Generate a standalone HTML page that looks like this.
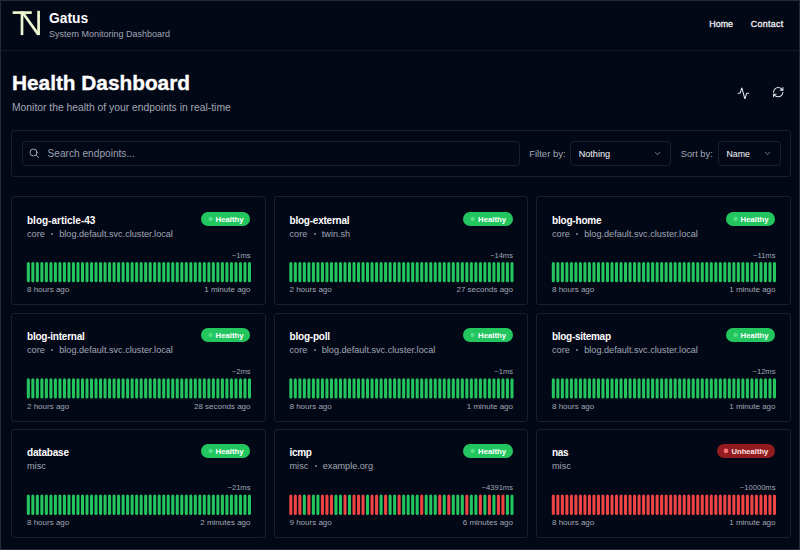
<!DOCTYPE html>
<html><head><meta charset="utf-8"><title>Gatus</title>
<style>
html,body{margin:0;padding:0;}
body{width:800px;height:550px;overflow:hidden;background:#030817;position:relative;font-family:"Liberation Sans", sans-serif;}
.t{position:absolute;white-space:nowrap;line-height:1;}
.b{position:absolute;box-sizing:border-box;}
.bars{position:absolute;height:20.5px;}
.bars i{position:absolute;top:0;width:3px;height:20.5px;border-radius:1.2px;}
</style></head><body>
<div class="b" style="left:0;top:0;width:800px;height:550px;border:1px solid #242937;box-sizing:border-box;z-index:10"></div>
<div class="b" style="left:0;top:50px;width:800px;height:1px;background:#131827"></div>
<svg class="b" style="left:0;top:0" width="60" height="50" viewBox="0 0 60 50">
<g stroke="#ecf5d0" stroke-width="2.7" fill="none" stroke-linecap="butt">
<path d="M12.6 12.6 H31.8"/>
<path d="M22 11.3 V35.1"/>
<path d="M22.4 12.3 L38.4 34.6"/>
<path d="M38.6 10.8 V35.1"/>
</g></svg>
<div class="t" style="left:49.00px;top:11.82px;font-size:13.8px;color:#ffffff;font-weight:700;">Gatus</div>
<div class="t" style="left:49.00px;top:30.38px;font-size:9px;color:#a1a7b4;font-weight:400;">System Monitoring Dashboard</div>
<div class="t" style="left:709.30px;top:20.27px;font-size:8.9px;color:#eef0f4;font-weight:400;-webkit-text-stroke:0.3px #eef0f4">Home</div>
<div class="t" style="left:750.80px;top:20.27px;font-size:8.9px;color:#eef0f4;font-weight:400;-webkit-text-stroke:0.3px #eef0f4;letter-spacing:0.3px">Contact</div>
<div class="t" style="left:12.00px;top:73.19px;font-size:20.8px;color:#ffffff;font-weight:700;-webkit-text-stroke:0.35px #fff">Health Dashboard</div>
<div class="t" style="left:12.00px;top:103.25px;font-size:10.34px;color:#a1a7b4;font-weight:400;">Monitor the health of your endpoints in real-time</div>
<svg class="b" style="left:737.3px;top:86.8px" width="12.7" height="12.7" viewBox="0 0 24 24"><path d="M22 12h-2.48a2 2 0 0 0-1.93 1.46l-2.35 8.36a.25.25 0 0 1-.48 0L9.24 2.18a.25.25 0 0 0-.48 0l-2.35 8.36A2 2 0 0 1 4.49 12H2" stroke="#e5e7eb" stroke-width="2" fill="none" stroke-linecap="round" stroke-linejoin="round"/></svg>
<svg class="b" style="left:772.4px;top:86.2px" width="12.4" height="12.4" viewBox="0 0 24 24"><g stroke="#e5e7eb" stroke-width="2" fill="none" stroke-linecap="round" stroke-linejoin="round"><path d="M3 12a9 9 0 0 1 9-9 9.75 9.75 0 0 1 6.74 2.74L21 8"/><path d="M21 3v5h-5"/><path d="M21 12a9 9 0 0 1-9 9 9.75 9.75 0 0 1-6.74-2.74L3 16"/><path d="M8 16H3v5"/></g></svg>
<div class="b" style="left:11.00px;top:130.00px;width:779.50px;height:46.50px;border:1px solid #1a1f2e;border-radius:3px;background:transparent;"></div>
<div class="b" style="left:22.00px;top:141.00px;width:497.50px;height:25.00px;border:1px solid #1a1f2e;border-radius:4px;background:transparent;"></div>
<svg class="b" style="left:28px;top:147px" width="12" height="12" viewBox="0 0 24 24"><g stroke="#a3a9b7" stroke-width="2" fill="none" stroke-linecap="round"><circle cx="11" cy="11" r="7"/><path d="m21 21-4.3-4.3"/></g></svg>
<div class="t" style="left:47.60px;top:149.32px;font-size:10.14px;color:#9aa1b2;font-weight:400;">Search endpoints...</div>
<div class="t" style="left:529.20px;top:149.36px;font-size:9.5px;color:#a1a7b4;font-weight:400;">Filter by:</div>
<div class="b" style="left:570.00px;top:141.00px;width:100.60px;height:25.00px;border:1px solid #1a1f2e;border-radius:4px;background:transparent;"></div>
<div class="t" style="left:578.70px;top:149.70px;font-size:9.1px;color:#f8fafc;font-weight:400;">Nothing</div>
<div class="t" style="left:680.70px;top:149.53px;font-size:9.3px;color:#a1a7b4;font-weight:400;">Sort by:</div>
<div class="b" style="left:718.20px;top:141.00px;width:63.00px;height:25.00px;border:1px solid #1a1f2e;border-radius:4px;background:transparent;"></div>
<div class="t" style="left:726.50px;top:150.45px;font-size:8.8px;color:#f8fafc;font-weight:400;">Name</div>
<svg class="b" style="left:653.0px;top:149px" width="9" height="9" viewBox="0 0 24 24"><path d="m6 9 6 6 6-6" stroke="#9aa1b2" stroke-width="2" fill="none" stroke-linecap="round" stroke-linejoin="round"/></svg>
<svg class="b" style="left:762.8px;top:149px" width="9" height="9" viewBox="0 0 24 24"><path d="m6 9 6 6 6-6" stroke="#9aa1b2" stroke-width="2" fill="none" stroke-linecap="round" stroke-linejoin="round"/></svg>
<div class="b" style="left:11.00px;top:196.00px;width:254.50px;height:109.00px;border:1px solid #1a1f2e;border-radius:3px;background:transparent;"></div>
<div class="t" style="left:27.00px;top:215.94px;font-size:10px;color:#ffffff;font-weight:700;letter-spacing:0px">blog-article-43</div>
<div class="t" style="left:27.00px;top:229.85px;font-size:9.15px;color:#a1a7b4;font-weight:400;">core<span style="display:inline-block;width:2.2px;height:2.2px;border-radius:50%;background:#a1a7b4;margin:0 6.0px 0 6.3px;vertical-align:1.9px;opacity:0.85"></span>blog.default.svc.cluster.local</div>
<div class="b" style="left:200.80px;top:212.00px;width:49.5px;height:13.5px;border-radius:7px;background:#22c55e"></div>
<svg class="b" style="left:200.80px;top:212.00px" width="20" height="14"><circle cx="9.6" cy="7.0" r="2.15" fill="#55dd88"/></svg>
<div class="t" style="left:215.60px;top:215.74px;font-size:7.75px;color:#ffffff;font-weight:700;">Healthy</div>
<div class="t" style="right:549.50px;top:252.07px;font-size:7.6px;color:#a1a7b4;font-weight:400;text-align:right;">~1ms</div>
<svg class="b" style="left:26px;top:262px" width="227" height="22"><rect x="0.80" y="0.00" width="3.06" height="20.3" rx="1.5" fill="#22c55e"/><rect x="5.31" y="0.00" width="3.06" height="20.3" rx="1.5" fill="#22c55e"/><rect x="9.83" y="0.00" width="3.06" height="20.3" rx="1.5" fill="#22c55e"/><rect x="14.34" y="0.00" width="3.06" height="20.3" rx="1.5" fill="#22c55e"/><rect x="18.85" y="0.00" width="3.06" height="20.3" rx="1.5" fill="#22c55e"/><rect x="23.36" y="0.00" width="3.06" height="20.3" rx="1.5" fill="#22c55e"/><rect x="27.88" y="0.00" width="3.06" height="20.3" rx="1.5" fill="#22c55e"/><rect x="32.39" y="0.00" width="3.06" height="20.3" rx="1.5" fill="#22c55e"/><rect x="36.90" y="0.00" width="3.06" height="20.3" rx="1.5" fill="#22c55e"/><rect x="41.42" y="0.00" width="3.06" height="20.3" rx="1.5" fill="#22c55e"/><rect x="45.93" y="0.00" width="3.06" height="20.3" rx="1.5" fill="#22c55e"/><rect x="50.44" y="0.00" width="3.06" height="20.3" rx="1.5" fill="#22c55e"/><rect x="54.96" y="0.00" width="3.06" height="20.3" rx="1.5" fill="#22c55e"/><rect x="59.47" y="0.00" width="3.06" height="20.3" rx="1.5" fill="#22c55e"/><rect x="63.98" y="0.00" width="3.06" height="20.3" rx="1.5" fill="#22c55e"/><rect x="68.49" y="0.00" width="3.06" height="20.3" rx="1.5" fill="#22c55e"/><rect x="73.01" y="0.00" width="3.06" height="20.3" rx="1.5" fill="#22c55e"/><rect x="77.52" y="0.00" width="3.06" height="20.3" rx="1.5" fill="#22c55e"/><rect x="82.03" y="0.00" width="3.06" height="20.3" rx="1.5" fill="#22c55e"/><rect x="86.55" y="0.00" width="3.06" height="20.3" rx="1.5" fill="#22c55e"/><rect x="91.06" y="0.00" width="3.06" height="20.3" rx="1.5" fill="#22c55e"/><rect x="95.57" y="0.00" width="3.06" height="20.3" rx="1.5" fill="#22c55e"/><rect x="100.09" y="0.00" width="3.06" height="20.3" rx="1.5" fill="#22c55e"/><rect x="104.60" y="0.00" width="3.06" height="20.3" rx="1.5" fill="#22c55e"/><rect x="109.11" y="0.00" width="3.06" height="20.3" rx="1.5" fill="#22c55e"/><rect x="113.62" y="0.00" width="3.06" height="20.3" rx="1.5" fill="#22c55e"/><rect x="118.14" y="0.00" width="3.06" height="20.3" rx="1.5" fill="#22c55e"/><rect x="122.65" y="0.00" width="3.06" height="20.3" rx="1.5" fill="#22c55e"/><rect x="127.16" y="0.00" width="3.06" height="20.3" rx="1.5" fill="#22c55e"/><rect x="131.68" y="0.00" width="3.06" height="20.3" rx="1.5" fill="#22c55e"/><rect x="136.19" y="0.00" width="3.06" height="20.3" rx="1.5" fill="#22c55e"/><rect x="140.70" y="0.00" width="3.06" height="20.3" rx="1.5" fill="#22c55e"/><rect x="145.22" y="0.00" width="3.06" height="20.3" rx="1.5" fill="#22c55e"/><rect x="149.73" y="0.00" width="3.06" height="20.3" rx="1.5" fill="#22c55e"/><rect x="154.24" y="0.00" width="3.06" height="20.3" rx="1.5" fill="#22c55e"/><rect x="158.75" y="0.00" width="3.06" height="20.3" rx="1.5" fill="#22c55e"/><rect x="163.27" y="0.00" width="3.06" height="20.3" rx="1.5" fill="#22c55e"/><rect x="167.78" y="0.00" width="3.06" height="20.3" rx="1.5" fill="#22c55e"/><rect x="172.29" y="0.00" width="3.06" height="20.3" rx="1.5" fill="#22c55e"/><rect x="176.81" y="0.00" width="3.06" height="20.3" rx="1.5" fill="#22c55e"/><rect x="181.32" y="0.00" width="3.06" height="20.3" rx="1.5" fill="#22c55e"/><rect x="185.83" y="0.00" width="3.06" height="20.3" rx="1.5" fill="#22c55e"/><rect x="190.35" y="0.00" width="3.06" height="20.3" rx="1.5" fill="#22c55e"/><rect x="194.86" y="0.00" width="3.06" height="20.3" rx="1.5" fill="#22c55e"/><rect x="199.37" y="0.00" width="3.06" height="20.3" rx="1.5" fill="#22c55e"/><rect x="203.89" y="0.00" width="3.06" height="20.3" rx="1.5" fill="#22c55e"/><rect x="208.40" y="0.00" width="3.06" height="20.3" rx="1.5" fill="#22c55e"/><rect x="212.91" y="0.00" width="3.06" height="20.3" rx="1.5" fill="#22c55e"/><rect x="217.42" y="0.00" width="3.06" height="20.3" rx="1.5" fill="#22c55e"/><rect x="221.94" y="0.00" width="3.06" height="20.3" rx="1.5" fill="#22c55e"/></svg>
<div class="t" style="left:27.00px;top:286.33px;font-size:8px;color:#a1a7b4;font-weight:400;">8 hours ago</div>
<div class="t" style="right:549.50px;top:286.33px;font-size:8px;color:#a1a7b4;font-weight:400;text-align:right;">1 minute ago</div>
<div class="b" style="left:273.50px;top:196.00px;width:254.50px;height:109.00px;border:1px solid #1a1f2e;border-radius:3px;background:transparent;"></div>
<div class="t" style="left:289.50px;top:215.94px;font-size:10px;color:#ffffff;font-weight:700;letter-spacing:-0.224px">blog-external</div>
<div class="t" style="left:289.50px;top:229.85px;font-size:9.15px;color:#a1a7b4;font-weight:400;">core<span style="display:inline-block;width:2.2px;height:2.2px;border-radius:50%;background:#a1a7b4;margin:0 6.0px 0 6.3px;vertical-align:1.9px;opacity:0.85"></span>twin.sh</div>
<div class="b" style="left:463.30px;top:212.00px;width:49.5px;height:13.5px;border-radius:7px;background:#22c55e"></div>
<svg class="b" style="left:463.30px;top:212.00px" width="20" height="14"><circle cx="9.6" cy="7.0" r="2.15" fill="#55dd88"/></svg>
<div class="t" style="left:478.10px;top:215.74px;font-size:7.75px;color:#ffffff;font-weight:700;">Healthy</div>
<div class="t" style="right:287.00px;top:252.07px;font-size:7.6px;color:#a1a7b4;font-weight:400;text-align:right;">~14ms</div>
<svg class="b" style="left:289px;top:262px" width="227" height="22"><rect x="0.30" y="0.00" width="3.06" height="20.3" rx="1.5" fill="#22c55e"/><rect x="4.81" y="0.00" width="3.06" height="20.3" rx="1.5" fill="#22c55e"/><rect x="9.33" y="0.00" width="3.06" height="20.3" rx="1.5" fill="#22c55e"/><rect x="13.84" y="0.00" width="3.06" height="20.3" rx="1.5" fill="#22c55e"/><rect x="18.35" y="0.00" width="3.06" height="20.3" rx="1.5" fill="#22c55e"/><rect x="22.87" y="0.00" width="3.06" height="20.3" rx="1.5" fill="#22c55e"/><rect x="27.38" y="0.00" width="3.06" height="20.3" rx="1.5" fill="#22c55e"/><rect x="31.89" y="0.00" width="3.06" height="20.3" rx="1.5" fill="#22c55e"/><rect x="36.40" y="0.00" width="3.06" height="20.3" rx="1.5" fill="#22c55e"/><rect x="40.92" y="0.00" width="3.06" height="20.3" rx="1.5" fill="#22c55e"/><rect x="45.43" y="0.00" width="3.06" height="20.3" rx="1.5" fill="#22c55e"/><rect x="49.94" y="0.00" width="3.06" height="20.3" rx="1.5" fill="#22c55e"/><rect x="54.46" y="0.00" width="3.06" height="20.3" rx="1.5" fill="#22c55e"/><rect x="58.97" y="0.00" width="3.06" height="20.3" rx="1.5" fill="#22c55e"/><rect x="63.48" y="0.00" width="3.06" height="20.3" rx="1.5" fill="#22c55e"/><rect x="68.00" y="0.00" width="3.06" height="20.3" rx="1.5" fill="#22c55e"/><rect x="72.51" y="0.00" width="3.06" height="20.3" rx="1.5" fill="#22c55e"/><rect x="77.02" y="0.00" width="3.06" height="20.3" rx="1.5" fill="#22c55e"/><rect x="81.53" y="0.00" width="3.06" height="20.3" rx="1.5" fill="#22c55e"/><rect x="86.05" y="0.00" width="3.06" height="20.3" rx="1.5" fill="#22c55e"/><rect x="90.56" y="0.00" width="3.06" height="20.3" rx="1.5" fill="#22c55e"/><rect x="95.07" y="0.00" width="3.06" height="20.3" rx="1.5" fill="#22c55e"/><rect x="99.59" y="0.00" width="3.06" height="20.3" rx="1.5" fill="#22c55e"/><rect x="104.10" y="0.00" width="3.06" height="20.3" rx="1.5" fill="#22c55e"/><rect x="108.61" y="0.00" width="3.06" height="20.3" rx="1.5" fill="#22c55e"/><rect x="113.13" y="0.00" width="3.06" height="20.3" rx="1.5" fill="#22c55e"/><rect x="117.64" y="0.00" width="3.06" height="20.3" rx="1.5" fill="#22c55e"/><rect x="122.15" y="0.00" width="3.06" height="20.3" rx="1.5" fill="#22c55e"/><rect x="126.66" y="0.00" width="3.06" height="20.3" rx="1.5" fill="#22c55e"/><rect x="131.18" y="0.00" width="3.06" height="20.3" rx="1.5" fill="#22c55e"/><rect x="135.69" y="0.00" width="3.06" height="20.3" rx="1.5" fill="#22c55e"/><rect x="140.20" y="0.00" width="3.06" height="20.3" rx="1.5" fill="#22c55e"/><rect x="144.72" y="0.00" width="3.06" height="20.3" rx="1.5" fill="#22c55e"/><rect x="149.23" y="0.00" width="3.06" height="20.3" rx="1.5" fill="#22c55e"/><rect x="153.74" y="0.00" width="3.06" height="20.3" rx="1.5" fill="#22c55e"/><rect x="158.25" y="0.00" width="3.06" height="20.3" rx="1.5" fill="#22c55e"/><rect x="162.77" y="0.00" width="3.06" height="20.3" rx="1.5" fill="#22c55e"/><rect x="167.28" y="0.00" width="3.06" height="20.3" rx="1.5" fill="#22c55e"/><rect x="171.79" y="0.00" width="3.06" height="20.3" rx="1.5" fill="#22c55e"/><rect x="176.31" y="0.00" width="3.06" height="20.3" rx="1.5" fill="#22c55e"/><rect x="180.82" y="0.00" width="3.06" height="20.3" rx="1.5" fill="#22c55e"/><rect x="185.33" y="0.00" width="3.06" height="20.3" rx="1.5" fill="#22c55e"/><rect x="189.85" y="0.00" width="3.06" height="20.3" rx="1.5" fill="#22c55e"/><rect x="194.36" y="0.00" width="3.06" height="20.3" rx="1.5" fill="#22c55e"/><rect x="198.87" y="0.00" width="3.06" height="20.3" rx="1.5" fill="#22c55e"/><rect x="203.39" y="0.00" width="3.06" height="20.3" rx="1.5" fill="#22c55e"/><rect x="207.90" y="0.00" width="3.06" height="20.3" rx="1.5" fill="#22c55e"/><rect x="212.41" y="0.00" width="3.06" height="20.3" rx="1.5" fill="#22c55e"/><rect x="216.92" y="0.00" width="3.06" height="20.3" rx="1.5" fill="#22c55e"/><rect x="221.44" y="0.00" width="3.06" height="20.3" rx="1.5" fill="#22c55e"/></svg>
<div class="t" style="left:289.50px;top:286.33px;font-size:8px;color:#a1a7b4;font-weight:400;">2 hours ago</div>
<div class="t" style="right:287.00px;top:286.33px;font-size:8px;color:#a1a7b4;font-weight:400;text-align:right;">27 seconds ago</div>
<div class="b" style="left:536.00px;top:196.00px;width:254.50px;height:109.00px;border:1px solid #1a1f2e;border-radius:3px;background:transparent;"></div>
<div class="t" style="left:552.00px;top:215.94px;font-size:10px;color:#ffffff;font-weight:700;letter-spacing:-0.188px">blog-home</div>
<div class="t" style="left:552.00px;top:229.85px;font-size:9.15px;color:#a1a7b4;font-weight:400;">core<span style="display:inline-block;width:2.2px;height:2.2px;border-radius:50%;background:#a1a7b4;margin:0 6.0px 0 6.3px;vertical-align:1.9px;opacity:0.85"></span>blog.default.svc.cluster.local</div>
<div class="b" style="left:725.80px;top:212.00px;width:49.5px;height:13.5px;border-radius:7px;background:#22c55e"></div>
<svg class="b" style="left:725.80px;top:212.00px" width="20" height="14"><circle cx="9.6" cy="7.0" r="2.15" fill="#55dd88"/></svg>
<div class="t" style="left:740.60px;top:215.74px;font-size:7.75px;color:#ffffff;font-weight:700;">Healthy</div>
<div class="t" style="right:24.50px;top:252.07px;font-size:7.6px;color:#a1a7b4;font-weight:400;text-align:right;">~11ms</div>
<svg class="b" style="left:551px;top:262px" width="227" height="22"><rect x="0.80" y="0.00" width="3.06" height="20.3" rx="1.5" fill="#22c55e"/><rect x="5.31" y="0.00" width="3.06" height="20.3" rx="1.5" fill="#22c55e"/><rect x="9.83" y="0.00" width="3.06" height="20.3" rx="1.5" fill="#22c55e"/><rect x="14.34" y="0.00" width="3.06" height="20.3" rx="1.5" fill="#22c55e"/><rect x="18.85" y="0.00" width="3.06" height="20.3" rx="1.5" fill="#22c55e"/><rect x="23.36" y="0.00" width="3.06" height="20.3" rx="1.5" fill="#22c55e"/><rect x="27.88" y="0.00" width="3.06" height="20.3" rx="1.5" fill="#22c55e"/><rect x="32.39" y="0.00" width="3.06" height="20.3" rx="1.5" fill="#22c55e"/><rect x="36.90" y="0.00" width="3.06" height="20.3" rx="1.5" fill="#22c55e"/><rect x="41.42" y="0.00" width="3.06" height="20.3" rx="1.5" fill="#22c55e"/><rect x="45.93" y="0.00" width="3.06" height="20.3" rx="1.5" fill="#22c55e"/><rect x="50.44" y="0.00" width="3.06" height="20.3" rx="1.5" fill="#22c55e"/><rect x="54.96" y="0.00" width="3.06" height="20.3" rx="1.5" fill="#22c55e"/><rect x="59.47" y="0.00" width="3.06" height="20.3" rx="1.5" fill="#22c55e"/><rect x="63.98" y="0.00" width="3.06" height="20.3" rx="1.5" fill="#22c55e"/><rect x="68.49" y="0.00" width="3.06" height="20.3" rx="1.5" fill="#22c55e"/><rect x="73.01" y="0.00" width="3.06" height="20.3" rx="1.5" fill="#22c55e"/><rect x="77.52" y="0.00" width="3.06" height="20.3" rx="1.5" fill="#22c55e"/><rect x="82.03" y="0.00" width="3.06" height="20.3" rx="1.5" fill="#22c55e"/><rect x="86.55" y="0.00" width="3.06" height="20.3" rx="1.5" fill="#22c55e"/><rect x="91.06" y="0.00" width="3.06" height="20.3" rx="1.5" fill="#22c55e"/><rect x="95.57" y="0.00" width="3.06" height="20.3" rx="1.5" fill="#22c55e"/><rect x="100.09" y="0.00" width="3.06" height="20.3" rx="1.5" fill="#22c55e"/><rect x="104.60" y="0.00" width="3.06" height="20.3" rx="1.5" fill="#22c55e"/><rect x="109.11" y="0.00" width="3.06" height="20.3" rx="1.5" fill="#22c55e"/><rect x="113.62" y="0.00" width="3.06" height="20.3" rx="1.5" fill="#22c55e"/><rect x="118.14" y="0.00" width="3.06" height="20.3" rx="1.5" fill="#22c55e"/><rect x="122.65" y="0.00" width="3.06" height="20.3" rx="1.5" fill="#22c55e"/><rect x="127.16" y="0.00" width="3.06" height="20.3" rx="1.5" fill="#22c55e"/><rect x="131.68" y="0.00" width="3.06" height="20.3" rx="1.5" fill="#22c55e"/><rect x="136.19" y="0.00" width="3.06" height="20.3" rx="1.5" fill="#22c55e"/><rect x="140.70" y="0.00" width="3.06" height="20.3" rx="1.5" fill="#22c55e"/><rect x="145.22" y="0.00" width="3.06" height="20.3" rx="1.5" fill="#22c55e"/><rect x="149.73" y="0.00" width="3.06" height="20.3" rx="1.5" fill="#22c55e"/><rect x="154.24" y="0.00" width="3.06" height="20.3" rx="1.5" fill="#22c55e"/><rect x="158.75" y="0.00" width="3.06" height="20.3" rx="1.5" fill="#22c55e"/><rect x="163.27" y="0.00" width="3.06" height="20.3" rx="1.5" fill="#22c55e"/><rect x="167.78" y="0.00" width="3.06" height="20.3" rx="1.5" fill="#22c55e"/><rect x="172.29" y="0.00" width="3.06" height="20.3" rx="1.5" fill="#22c55e"/><rect x="176.81" y="0.00" width="3.06" height="20.3" rx="1.5" fill="#22c55e"/><rect x="181.32" y="0.00" width="3.06" height="20.3" rx="1.5" fill="#22c55e"/><rect x="185.83" y="0.00" width="3.06" height="20.3" rx="1.5" fill="#22c55e"/><rect x="190.35" y="0.00" width="3.06" height="20.3" rx="1.5" fill="#22c55e"/><rect x="194.86" y="0.00" width="3.06" height="20.3" rx="1.5" fill="#22c55e"/><rect x="199.37" y="0.00" width="3.06" height="20.3" rx="1.5" fill="#22c55e"/><rect x="203.88" y="0.00" width="3.06" height="20.3" rx="1.5" fill="#22c55e"/><rect x="208.40" y="0.00" width="3.06" height="20.3" rx="1.5" fill="#22c55e"/><rect x="212.91" y="0.00" width="3.06" height="20.3" rx="1.5" fill="#22c55e"/><rect x="217.42" y="0.00" width="3.06" height="20.3" rx="1.5" fill="#22c55e"/><rect x="221.94" y="0.00" width="3.06" height="20.3" rx="1.5" fill="#22c55e"/></svg>
<div class="t" style="left:552.00px;top:286.33px;font-size:8px;color:#a1a7b4;font-weight:400;">8 hours ago</div>
<div class="t" style="right:24.50px;top:286.33px;font-size:8px;color:#a1a7b4;font-weight:400;text-align:right;">1 minute ago</div>
<div class="b" style="left:11.00px;top:313.00px;width:254.50px;height:109.00px;border:1px solid #1a1f2e;border-radius:3px;background:transparent;"></div>
<div class="t" style="left:27.00px;top:332.13px;font-size:10px;color:#ffffff;font-weight:700;letter-spacing:-0.229px">blog-internal</div>
<div class="t" style="left:27.00px;top:346.05px;font-size:9.15px;color:#a1a7b4;font-weight:400;">core<span style="display:inline-block;width:2.2px;height:2.2px;border-radius:50%;background:#a1a7b4;margin:0 6.0px 0 6.3px;vertical-align:1.9px;opacity:0.85"></span>blog.default.svc.cluster.local</div>
<div class="b" style="left:200.80px;top:328.20px;width:49.5px;height:13.5px;border-radius:7px;background:#22c55e"></div>
<svg class="b" style="left:200.80px;top:328.20px" width="20" height="14"><circle cx="9.6" cy="7.0" r="2.15" fill="#55dd88"/></svg>
<div class="t" style="left:215.60px;top:331.94px;font-size:7.75px;color:#ffffff;font-weight:700;">Healthy</div>
<div class="t" style="right:549.50px;top:368.27px;font-size:7.6px;color:#a1a7b4;font-weight:400;text-align:right;">~2ms</div>
<svg class="b" style="left:26px;top:378px" width="227" height="22"><rect x="0.80" y="0.30" width="3.06" height="20.3" rx="1.5" fill="#22c55e"/><rect x="5.31" y="0.30" width="3.06" height="20.3" rx="1.5" fill="#22c55e"/><rect x="9.83" y="0.30" width="3.06" height="20.3" rx="1.5" fill="#22c55e"/><rect x="14.34" y="0.30" width="3.06" height="20.3" rx="1.5" fill="#22c55e"/><rect x="18.85" y="0.30" width="3.06" height="20.3" rx="1.5" fill="#22c55e"/><rect x="23.36" y="0.30" width="3.06" height="20.3" rx="1.5" fill="#22c55e"/><rect x="27.88" y="0.30" width="3.06" height="20.3" rx="1.5" fill="#22c55e"/><rect x="32.39" y="0.30" width="3.06" height="20.3" rx="1.5" fill="#22c55e"/><rect x="36.90" y="0.30" width="3.06" height="20.3" rx="1.5" fill="#22c55e"/><rect x="41.42" y="0.30" width="3.06" height="20.3" rx="1.5" fill="#22c55e"/><rect x="45.93" y="0.30" width="3.06" height="20.3" rx="1.5" fill="#22c55e"/><rect x="50.44" y="0.30" width="3.06" height="20.3" rx="1.5" fill="#22c55e"/><rect x="54.96" y="0.30" width="3.06" height="20.3" rx="1.5" fill="#22c55e"/><rect x="59.47" y="0.30" width="3.06" height="20.3" rx="1.5" fill="#22c55e"/><rect x="63.98" y="0.30" width="3.06" height="20.3" rx="1.5" fill="#22c55e"/><rect x="68.49" y="0.30" width="3.06" height="20.3" rx="1.5" fill="#22c55e"/><rect x="73.01" y="0.30" width="3.06" height="20.3" rx="1.5" fill="#22c55e"/><rect x="77.52" y="0.30" width="3.06" height="20.3" rx="1.5" fill="#22c55e"/><rect x="82.03" y="0.30" width="3.06" height="20.3" rx="1.5" fill="#22c55e"/><rect x="86.55" y="0.30" width="3.06" height="20.3" rx="1.5" fill="#22c55e"/><rect x="91.06" y="0.30" width="3.06" height="20.3" rx="1.5" fill="#22c55e"/><rect x="95.57" y="0.30" width="3.06" height="20.3" rx="1.5" fill="#22c55e"/><rect x="100.09" y="0.30" width="3.06" height="20.3" rx="1.5" fill="#22c55e"/><rect x="104.60" y="0.30" width="3.06" height="20.3" rx="1.5" fill="#22c55e"/><rect x="109.11" y="0.30" width="3.06" height="20.3" rx="1.5" fill="#22c55e"/><rect x="113.62" y="0.30" width="3.06" height="20.3" rx="1.5" fill="#22c55e"/><rect x="118.14" y="0.30" width="3.06" height="20.3" rx="1.5" fill="#22c55e"/><rect x="122.65" y="0.30" width="3.06" height="20.3" rx="1.5" fill="#22c55e"/><rect x="127.16" y="0.30" width="3.06" height="20.3" rx="1.5" fill="#22c55e"/><rect x="131.68" y="0.30" width="3.06" height="20.3" rx="1.5" fill="#22c55e"/><rect x="136.19" y="0.30" width="3.06" height="20.3" rx="1.5" fill="#22c55e"/><rect x="140.70" y="0.30" width="3.06" height="20.3" rx="1.5" fill="#22c55e"/><rect x="145.22" y="0.30" width="3.06" height="20.3" rx="1.5" fill="#22c55e"/><rect x="149.73" y="0.30" width="3.06" height="20.3" rx="1.5" fill="#22c55e"/><rect x="154.24" y="0.30" width="3.06" height="20.3" rx="1.5" fill="#22c55e"/><rect x="158.75" y="0.30" width="3.06" height="20.3" rx="1.5" fill="#22c55e"/><rect x="163.27" y="0.30" width="3.06" height="20.3" rx="1.5" fill="#22c55e"/><rect x="167.78" y="0.30" width="3.06" height="20.3" rx="1.5" fill="#22c55e"/><rect x="172.29" y="0.30" width="3.06" height="20.3" rx="1.5" fill="#22c55e"/><rect x="176.81" y="0.30" width="3.06" height="20.3" rx="1.5" fill="#22c55e"/><rect x="181.32" y="0.30" width="3.06" height="20.3" rx="1.5" fill="#22c55e"/><rect x="185.83" y="0.30" width="3.06" height="20.3" rx="1.5" fill="#22c55e"/><rect x="190.35" y="0.30" width="3.06" height="20.3" rx="1.5" fill="#22c55e"/><rect x="194.86" y="0.30" width="3.06" height="20.3" rx="1.5" fill="#22c55e"/><rect x="199.37" y="0.30" width="3.06" height="20.3" rx="1.5" fill="#22c55e"/><rect x="203.89" y="0.30" width="3.06" height="20.3" rx="1.5" fill="#22c55e"/><rect x="208.40" y="0.30" width="3.06" height="20.3" rx="1.5" fill="#22c55e"/><rect x="212.91" y="0.30" width="3.06" height="20.3" rx="1.5" fill="#22c55e"/><rect x="217.42" y="0.30" width="3.06" height="20.3" rx="1.5" fill="#22c55e"/><rect x="221.94" y="0.30" width="3.06" height="20.3" rx="1.5" fill="#22c55e"/></svg>
<div class="t" style="left:27.00px;top:402.53px;font-size:8px;color:#a1a7b4;font-weight:400;">2 hours ago</div>
<div class="t" style="right:549.50px;top:402.53px;font-size:8px;color:#a1a7b4;font-weight:400;text-align:right;">28 seconds ago</div>
<div class="b" style="left:273.50px;top:313.00px;width:254.50px;height:109.00px;border:1px solid #1a1f2e;border-radius:3px;background:transparent;"></div>
<div class="t" style="left:289.50px;top:332.13px;font-size:10px;color:#ffffff;font-weight:700;letter-spacing:-0.201px">blog-poll</div>
<div class="t" style="left:289.50px;top:346.05px;font-size:9.15px;color:#a1a7b4;font-weight:400;">core<span style="display:inline-block;width:2.2px;height:2.2px;border-radius:50%;background:#a1a7b4;margin:0 6.0px 0 6.3px;vertical-align:1.9px;opacity:0.85"></span>blog.default.svc.cluster.local</div>
<div class="b" style="left:463.30px;top:328.20px;width:49.5px;height:13.5px;border-radius:7px;background:#22c55e"></div>
<svg class="b" style="left:463.30px;top:328.20px" width="20" height="14"><circle cx="9.6" cy="7.0" r="2.15" fill="#55dd88"/></svg>
<div class="t" style="left:478.10px;top:331.94px;font-size:7.75px;color:#ffffff;font-weight:700;">Healthy</div>
<div class="t" style="right:287.00px;top:368.27px;font-size:7.6px;color:#a1a7b4;font-weight:400;text-align:right;">~1ms</div>
<svg class="b" style="left:289px;top:378px" width="227" height="22"><rect x="0.30" y="0.30" width="3.06" height="20.3" rx="1.5" fill="#22c55e"/><rect x="4.81" y="0.30" width="3.06" height="20.3" rx="1.5" fill="#22c55e"/><rect x="9.33" y="0.30" width="3.06" height="20.3" rx="1.5" fill="#22c55e"/><rect x="13.84" y="0.30" width="3.06" height="20.3" rx="1.5" fill="#22c55e"/><rect x="18.35" y="0.30" width="3.06" height="20.3" rx="1.5" fill="#22c55e"/><rect x="22.87" y="0.30" width="3.06" height="20.3" rx="1.5" fill="#22c55e"/><rect x="27.38" y="0.30" width="3.06" height="20.3" rx="1.5" fill="#22c55e"/><rect x="31.89" y="0.30" width="3.06" height="20.3" rx="1.5" fill="#22c55e"/><rect x="36.40" y="0.30" width="3.06" height="20.3" rx="1.5" fill="#22c55e"/><rect x="40.92" y="0.30" width="3.06" height="20.3" rx="1.5" fill="#22c55e"/><rect x="45.43" y="0.30" width="3.06" height="20.3" rx="1.5" fill="#22c55e"/><rect x="49.94" y="0.30" width="3.06" height="20.3" rx="1.5" fill="#22c55e"/><rect x="54.46" y="0.30" width="3.06" height="20.3" rx="1.5" fill="#22c55e"/><rect x="58.97" y="0.30" width="3.06" height="20.3" rx="1.5" fill="#22c55e"/><rect x="63.48" y="0.30" width="3.06" height="20.3" rx="1.5" fill="#22c55e"/><rect x="68.00" y="0.30" width="3.06" height="20.3" rx="1.5" fill="#22c55e"/><rect x="72.51" y="0.30" width="3.06" height="20.3" rx="1.5" fill="#22c55e"/><rect x="77.02" y="0.30" width="3.06" height="20.3" rx="1.5" fill="#22c55e"/><rect x="81.53" y="0.30" width="3.06" height="20.3" rx="1.5" fill="#22c55e"/><rect x="86.05" y="0.30" width="3.06" height="20.3" rx="1.5" fill="#22c55e"/><rect x="90.56" y="0.30" width="3.06" height="20.3" rx="1.5" fill="#22c55e"/><rect x="95.07" y="0.30" width="3.06" height="20.3" rx="1.5" fill="#22c55e"/><rect x="99.59" y="0.30" width="3.06" height="20.3" rx="1.5" fill="#22c55e"/><rect x="104.10" y="0.30" width="3.06" height="20.3" rx="1.5" fill="#22c55e"/><rect x="108.61" y="0.30" width="3.06" height="20.3" rx="1.5" fill="#22c55e"/><rect x="113.13" y="0.30" width="3.06" height="20.3" rx="1.5" fill="#22c55e"/><rect x="117.64" y="0.30" width="3.06" height="20.3" rx="1.5" fill="#22c55e"/><rect x="122.15" y="0.30" width="3.06" height="20.3" rx="1.5" fill="#22c55e"/><rect x="126.66" y="0.30" width="3.06" height="20.3" rx="1.5" fill="#22c55e"/><rect x="131.18" y="0.30" width="3.06" height="20.3" rx="1.5" fill="#22c55e"/><rect x="135.69" y="0.30" width="3.06" height="20.3" rx="1.5" fill="#22c55e"/><rect x="140.20" y="0.30" width="3.06" height="20.3" rx="1.5" fill="#22c55e"/><rect x="144.72" y="0.30" width="3.06" height="20.3" rx="1.5" fill="#22c55e"/><rect x="149.23" y="0.30" width="3.06" height="20.3" rx="1.5" fill="#22c55e"/><rect x="153.74" y="0.30" width="3.06" height="20.3" rx="1.5" fill="#22c55e"/><rect x="158.25" y="0.30" width="3.06" height="20.3" rx="1.5" fill="#22c55e"/><rect x="162.77" y="0.30" width="3.06" height="20.3" rx="1.5" fill="#22c55e"/><rect x="167.28" y="0.30" width="3.06" height="20.3" rx="1.5" fill="#22c55e"/><rect x="171.79" y="0.30" width="3.06" height="20.3" rx="1.5" fill="#22c55e"/><rect x="176.31" y="0.30" width="3.06" height="20.3" rx="1.5" fill="#22c55e"/><rect x="180.82" y="0.30" width="3.06" height="20.3" rx="1.5" fill="#22c55e"/><rect x="185.33" y="0.30" width="3.06" height="20.3" rx="1.5" fill="#22c55e"/><rect x="189.85" y="0.30" width="3.06" height="20.3" rx="1.5" fill="#22c55e"/><rect x="194.36" y="0.30" width="3.06" height="20.3" rx="1.5" fill="#22c55e"/><rect x="198.87" y="0.30" width="3.06" height="20.3" rx="1.5" fill="#22c55e"/><rect x="203.39" y="0.30" width="3.06" height="20.3" rx="1.5" fill="#22c55e"/><rect x="207.90" y="0.30" width="3.06" height="20.3" rx="1.5" fill="#22c55e"/><rect x="212.41" y="0.30" width="3.06" height="20.3" rx="1.5" fill="#22c55e"/><rect x="216.92" y="0.30" width="3.06" height="20.3" rx="1.5" fill="#22c55e"/><rect x="221.44" y="0.30" width="3.06" height="20.3" rx="1.5" fill="#22c55e"/></svg>
<div class="t" style="left:289.50px;top:402.53px;font-size:8px;color:#a1a7b4;font-weight:400;">8 hours ago</div>
<div class="t" style="right:287.00px;top:402.53px;font-size:8px;color:#a1a7b4;font-weight:400;text-align:right;">1 minute ago</div>
<div class="b" style="left:536.00px;top:313.00px;width:254.50px;height:109.00px;border:1px solid #1a1f2e;border-radius:3px;background:transparent;"></div>
<div class="t" style="left:552.00px;top:332.13px;font-size:10px;color:#ffffff;font-weight:700;letter-spacing:-0.294px">blog-sitemap</div>
<div class="t" style="left:552.00px;top:346.05px;font-size:9.15px;color:#a1a7b4;font-weight:400;">core<span style="display:inline-block;width:2.2px;height:2.2px;border-radius:50%;background:#a1a7b4;margin:0 6.0px 0 6.3px;vertical-align:1.9px;opacity:0.85"></span>blog.default.svc.cluster.local</div>
<div class="b" style="left:725.80px;top:328.20px;width:49.5px;height:13.5px;border-radius:7px;background:#22c55e"></div>
<svg class="b" style="left:725.80px;top:328.20px" width="20" height="14"><circle cx="9.6" cy="7.0" r="2.15" fill="#55dd88"/></svg>
<div class="t" style="left:740.60px;top:331.94px;font-size:7.75px;color:#ffffff;font-weight:700;">Healthy</div>
<div class="t" style="right:24.50px;top:368.27px;font-size:7.6px;color:#a1a7b4;font-weight:400;text-align:right;">~12ms</div>
<svg class="b" style="left:551px;top:378px" width="227" height="22"><rect x="0.80" y="0.30" width="3.06" height="20.3" rx="1.5" fill="#22c55e"/><rect x="5.31" y="0.30" width="3.06" height="20.3" rx="1.5" fill="#22c55e"/><rect x="9.83" y="0.30" width="3.06" height="20.3" rx="1.5" fill="#22c55e"/><rect x="14.34" y="0.30" width="3.06" height="20.3" rx="1.5" fill="#22c55e"/><rect x="18.85" y="0.30" width="3.06" height="20.3" rx="1.5" fill="#22c55e"/><rect x="23.36" y="0.30" width="3.06" height="20.3" rx="1.5" fill="#22c55e"/><rect x="27.88" y="0.30" width="3.06" height="20.3" rx="1.5" fill="#22c55e"/><rect x="32.39" y="0.30" width="3.06" height="20.3" rx="1.5" fill="#22c55e"/><rect x="36.90" y="0.30" width="3.06" height="20.3" rx="1.5" fill="#22c55e"/><rect x="41.42" y="0.30" width="3.06" height="20.3" rx="1.5" fill="#22c55e"/><rect x="45.93" y="0.30" width="3.06" height="20.3" rx="1.5" fill="#22c55e"/><rect x="50.44" y="0.30" width="3.06" height="20.3" rx="1.5" fill="#22c55e"/><rect x="54.96" y="0.30" width="3.06" height="20.3" rx="1.5" fill="#22c55e"/><rect x="59.47" y="0.30" width="3.06" height="20.3" rx="1.5" fill="#22c55e"/><rect x="63.98" y="0.30" width="3.06" height="20.3" rx="1.5" fill="#22c55e"/><rect x="68.49" y="0.30" width="3.06" height="20.3" rx="1.5" fill="#22c55e"/><rect x="73.01" y="0.30" width="3.06" height="20.3" rx="1.5" fill="#22c55e"/><rect x="77.52" y="0.30" width="3.06" height="20.3" rx="1.5" fill="#22c55e"/><rect x="82.03" y="0.30" width="3.06" height="20.3" rx="1.5" fill="#22c55e"/><rect x="86.55" y="0.30" width="3.06" height="20.3" rx="1.5" fill="#22c55e"/><rect x="91.06" y="0.30" width="3.06" height="20.3" rx="1.5" fill="#22c55e"/><rect x="95.57" y="0.30" width="3.06" height="20.3" rx="1.5" fill="#22c55e"/><rect x="100.09" y="0.30" width="3.06" height="20.3" rx="1.5" fill="#22c55e"/><rect x="104.60" y="0.30" width="3.06" height="20.3" rx="1.5" fill="#22c55e"/><rect x="109.11" y="0.30" width="3.06" height="20.3" rx="1.5" fill="#22c55e"/><rect x="113.62" y="0.30" width="3.06" height="20.3" rx="1.5" fill="#22c55e"/><rect x="118.14" y="0.30" width="3.06" height="20.3" rx="1.5" fill="#22c55e"/><rect x="122.65" y="0.30" width="3.06" height="20.3" rx="1.5" fill="#22c55e"/><rect x="127.16" y="0.30" width="3.06" height="20.3" rx="1.5" fill="#22c55e"/><rect x="131.68" y="0.30" width="3.06" height="20.3" rx="1.5" fill="#22c55e"/><rect x="136.19" y="0.30" width="3.06" height="20.3" rx="1.5" fill="#22c55e"/><rect x="140.70" y="0.30" width="3.06" height="20.3" rx="1.5" fill="#22c55e"/><rect x="145.22" y="0.30" width="3.06" height="20.3" rx="1.5" fill="#22c55e"/><rect x="149.73" y="0.30" width="3.06" height="20.3" rx="1.5" fill="#22c55e"/><rect x="154.24" y="0.30" width="3.06" height="20.3" rx="1.5" fill="#22c55e"/><rect x="158.75" y="0.30" width="3.06" height="20.3" rx="1.5" fill="#22c55e"/><rect x="163.27" y="0.30" width="3.06" height="20.3" rx="1.5" fill="#22c55e"/><rect x="167.78" y="0.30" width="3.06" height="20.3" rx="1.5" fill="#22c55e"/><rect x="172.29" y="0.30" width="3.06" height="20.3" rx="1.5" fill="#22c55e"/><rect x="176.81" y="0.30" width="3.06" height="20.3" rx="1.5" fill="#22c55e"/><rect x="181.32" y="0.30" width="3.06" height="20.3" rx="1.5" fill="#22c55e"/><rect x="185.83" y="0.30" width="3.06" height="20.3" rx="1.5" fill="#22c55e"/><rect x="190.35" y="0.30" width="3.06" height="20.3" rx="1.5" fill="#22c55e"/><rect x="194.86" y="0.30" width="3.06" height="20.3" rx="1.5" fill="#22c55e"/><rect x="199.37" y="0.30" width="3.06" height="20.3" rx="1.5" fill="#22c55e"/><rect x="203.88" y="0.30" width="3.06" height="20.3" rx="1.5" fill="#22c55e"/><rect x="208.40" y="0.30" width="3.06" height="20.3" rx="1.5" fill="#22c55e"/><rect x="212.91" y="0.30" width="3.06" height="20.3" rx="1.5" fill="#22c55e"/><rect x="217.42" y="0.30" width="3.06" height="20.3" rx="1.5" fill="#22c55e"/><rect x="221.94" y="0.30" width="3.06" height="20.3" rx="1.5" fill="#22c55e"/></svg>
<div class="t" style="left:552.00px;top:402.53px;font-size:8px;color:#a1a7b4;font-weight:400;">8 hours ago</div>
<div class="t" style="right:24.50px;top:402.53px;font-size:8px;color:#a1a7b4;font-weight:400;text-align:right;">1 minute ago</div>
<div class="b" style="left:11.00px;top:429.00px;width:254.50px;height:109.00px;border:1px solid #1a1f2e;border-radius:3px;background:transparent;"></div>
<div class="t" style="left:27.00px;top:448.33px;font-size:10px;color:#ffffff;font-weight:700;letter-spacing:-0.193px">database</div>
<div class="t" style="left:27.00px;top:462.25px;font-size:9.15px;color:#a1a7b4;font-weight:400;">misc</div>
<div class="b" style="left:200.80px;top:444.40px;width:49.5px;height:13.5px;border-radius:7px;background:#22c55e"></div>
<svg class="b" style="left:200.80px;top:444.40px" width="20" height="14"><circle cx="9.6" cy="7.0" r="2.15" fill="#55dd88"/></svg>
<div class="t" style="left:215.60px;top:448.14px;font-size:7.75px;color:#ffffff;font-weight:700;">Healthy</div>
<div class="t" style="right:549.50px;top:484.47px;font-size:7.6px;color:#a1a7b4;font-weight:400;text-align:right;">~21ms</div>
<svg class="b" style="left:26px;top:494px" width="227" height="22"><rect x="0.80" y="0.60" width="3.06" height="20.3" rx="1.5" fill="#22c55e"/><rect x="5.31" y="0.60" width="3.06" height="20.3" rx="1.5" fill="#22c55e"/><rect x="9.83" y="0.60" width="3.06" height="20.3" rx="1.5" fill="#22c55e"/><rect x="14.34" y="0.60" width="3.06" height="20.3" rx="1.5" fill="#22c55e"/><rect x="18.85" y="0.60" width="3.06" height="20.3" rx="1.5" fill="#22c55e"/><rect x="23.36" y="0.60" width="3.06" height="20.3" rx="1.5" fill="#22c55e"/><rect x="27.88" y="0.60" width="3.06" height="20.3" rx="1.5" fill="#22c55e"/><rect x="32.39" y="0.60" width="3.06" height="20.3" rx="1.5" fill="#22c55e"/><rect x="36.90" y="0.60" width="3.06" height="20.3" rx="1.5" fill="#22c55e"/><rect x="41.42" y="0.60" width="3.06" height="20.3" rx="1.5" fill="#22c55e"/><rect x="45.93" y="0.60" width="3.06" height="20.3" rx="1.5" fill="#22c55e"/><rect x="50.44" y="0.60" width="3.06" height="20.3" rx="1.5" fill="#22c55e"/><rect x="54.96" y="0.60" width="3.06" height="20.3" rx="1.5" fill="#22c55e"/><rect x="59.47" y="0.60" width="3.06" height="20.3" rx="1.5" fill="#22c55e"/><rect x="63.98" y="0.60" width="3.06" height="20.3" rx="1.5" fill="#22c55e"/><rect x="68.49" y="0.60" width="3.06" height="20.3" rx="1.5" fill="#22c55e"/><rect x="73.01" y="0.60" width="3.06" height="20.3" rx="1.5" fill="#22c55e"/><rect x="77.52" y="0.60" width="3.06" height="20.3" rx="1.5" fill="#22c55e"/><rect x="82.03" y="0.60" width="3.06" height="20.3" rx="1.5" fill="#22c55e"/><rect x="86.55" y="0.60" width="3.06" height="20.3" rx="1.5" fill="#22c55e"/><rect x="91.06" y="0.60" width="3.06" height="20.3" rx="1.5" fill="#22c55e"/><rect x="95.57" y="0.60" width="3.06" height="20.3" rx="1.5" fill="#22c55e"/><rect x="100.09" y="0.60" width="3.06" height="20.3" rx="1.5" fill="#22c55e"/><rect x="104.60" y="0.60" width="3.06" height="20.3" rx="1.5" fill="#22c55e"/><rect x="109.11" y="0.60" width="3.06" height="20.3" rx="1.5" fill="#22c55e"/><rect x="113.62" y="0.60" width="3.06" height="20.3" rx="1.5" fill="#22c55e"/><rect x="118.14" y="0.60" width="3.06" height="20.3" rx="1.5" fill="#22c55e"/><rect x="122.65" y="0.60" width="3.06" height="20.3" rx="1.5" fill="#22c55e"/><rect x="127.16" y="0.60" width="3.06" height="20.3" rx="1.5" fill="#22c55e"/><rect x="131.68" y="0.60" width="3.06" height="20.3" rx="1.5" fill="#22c55e"/><rect x="136.19" y="0.60" width="3.06" height="20.3" rx="1.5" fill="#22c55e"/><rect x="140.70" y="0.60" width="3.06" height="20.3" rx="1.5" fill="#22c55e"/><rect x="145.22" y="0.60" width="3.06" height="20.3" rx="1.5" fill="#22c55e"/><rect x="149.73" y="0.60" width="3.06" height="20.3" rx="1.5" fill="#22c55e"/><rect x="154.24" y="0.60" width="3.06" height="20.3" rx="1.5" fill="#22c55e"/><rect x="158.75" y="0.60" width="3.06" height="20.3" rx="1.5" fill="#22c55e"/><rect x="163.27" y="0.60" width="3.06" height="20.3" rx="1.5" fill="#22c55e"/><rect x="167.78" y="0.60" width="3.06" height="20.3" rx="1.5" fill="#22c55e"/><rect x="172.29" y="0.60" width="3.06" height="20.3" rx="1.5" fill="#22c55e"/><rect x="176.81" y="0.60" width="3.06" height="20.3" rx="1.5" fill="#22c55e"/><rect x="181.32" y="0.60" width="3.06" height="20.3" rx="1.5" fill="#22c55e"/><rect x="185.83" y="0.60" width="3.06" height="20.3" rx="1.5" fill="#22c55e"/><rect x="190.35" y="0.60" width="3.06" height="20.3" rx="1.5" fill="#22c55e"/><rect x="194.86" y="0.60" width="3.06" height="20.3" rx="1.5" fill="#22c55e"/><rect x="199.37" y="0.60" width="3.06" height="20.3" rx="1.5" fill="#22c55e"/><rect x="203.89" y="0.60" width="3.06" height="20.3" rx="1.5" fill="#22c55e"/><rect x="208.40" y="0.60" width="3.06" height="20.3" rx="1.5" fill="#22c55e"/><rect x="212.91" y="0.60" width="3.06" height="20.3" rx="1.5" fill="#22c55e"/><rect x="217.42" y="0.60" width="3.06" height="20.3" rx="1.5" fill="#22c55e"/><rect x="221.94" y="0.60" width="3.06" height="20.3" rx="1.5" fill="#22c55e"/></svg>
<div class="t" style="left:27.00px;top:518.73px;font-size:8px;color:#a1a7b4;font-weight:400;">8 hours ago</div>
<div class="t" style="right:549.50px;top:518.73px;font-size:8px;color:#a1a7b4;font-weight:400;text-align:right;">2 minutes ago</div>
<div class="b" style="left:273.50px;top:429.00px;width:254.50px;height:109.00px;border:1px solid #1a1f2e;border-radius:3px;background:transparent;"></div>
<div class="t" style="left:289.50px;top:448.33px;font-size:10px;color:#ffffff;font-weight:700;letter-spacing:-0.3px">icmp</div>
<div class="t" style="left:289.50px;top:462.25px;font-size:9.15px;color:#a1a7b4;font-weight:400;">misc<span style="display:inline-block;width:2.2px;height:2.2px;border-radius:50%;background:#a1a7b4;margin:0 6.0px 0 6.3px;vertical-align:1.9px;opacity:0.85"></span>example.org</div>
<div class="b" style="left:463.30px;top:444.40px;width:49.5px;height:13.5px;border-radius:7px;background:#22c55e"></div>
<svg class="b" style="left:463.30px;top:444.40px" width="20" height="14"><circle cx="9.6" cy="7.0" r="2.15" fill="#55dd88"/></svg>
<div class="t" style="left:478.10px;top:448.14px;font-size:7.75px;color:#ffffff;font-weight:700;">Healthy</div>
<div class="t" style="right:287.00px;top:484.47px;font-size:7.6px;color:#a1a7b4;font-weight:400;text-align:right;">~4391ms</div>
<svg class="b" style="left:289px;top:494px" width="227" height="22"><rect x="0.30" y="0.60" width="3.06" height="20.3" rx="1.5" fill="#ef4444"/><rect x="4.81" y="0.60" width="3.06" height="20.3" rx="1.5" fill="#ef4444"/><rect x="9.33" y="0.60" width="3.06" height="20.3" rx="1.5" fill="#ef4444"/><rect x="13.84" y="0.60" width="3.06" height="20.3" rx="1.5" fill="#22c55e"/><rect x="18.35" y="0.60" width="3.06" height="20.3" rx="1.5" fill="#ef4444"/><rect x="22.87" y="0.60" width="3.06" height="20.3" rx="1.5" fill="#22c55e"/><rect x="27.38" y="0.60" width="3.06" height="20.3" rx="1.5" fill="#22c55e"/><rect x="31.89" y="0.60" width="3.06" height="20.3" rx="1.5" fill="#ef4444"/><rect x="36.40" y="0.60" width="3.06" height="20.3" rx="1.5" fill="#ef4444"/><rect x="40.92" y="0.60" width="3.06" height="20.3" rx="1.5" fill="#ef4444"/><rect x="45.43" y="0.60" width="3.06" height="20.3" rx="1.5" fill="#22c55e"/><rect x="49.94" y="0.60" width="3.06" height="20.3" rx="1.5" fill="#22c55e"/><rect x="54.46" y="0.60" width="3.06" height="20.3" rx="1.5" fill="#ef4444"/><rect x="58.97" y="0.60" width="3.06" height="20.3" rx="1.5" fill="#22c55e"/><rect x="63.48" y="0.60" width="3.06" height="20.3" rx="1.5" fill="#ef4444"/><rect x="68.00" y="0.60" width="3.06" height="20.3" rx="1.5" fill="#ef4444"/><rect x="72.51" y="0.60" width="3.06" height="20.3" rx="1.5" fill="#ef4444"/><rect x="77.02" y="0.60" width="3.06" height="20.3" rx="1.5" fill="#22c55e"/><rect x="81.53" y="0.60" width="3.06" height="20.3" rx="1.5" fill="#ef4444"/><rect x="86.05" y="0.60" width="3.06" height="20.3" rx="1.5" fill="#ef4444"/><rect x="90.56" y="0.60" width="3.06" height="20.3" rx="1.5" fill="#22c55e"/><rect x="95.07" y="0.60" width="3.06" height="20.3" rx="1.5" fill="#ef4444"/><rect x="99.59" y="0.60" width="3.06" height="20.3" rx="1.5" fill="#22c55e"/><rect x="104.10" y="0.60" width="3.06" height="20.3" rx="1.5" fill="#22c55e"/><rect x="108.61" y="0.60" width="3.06" height="20.3" rx="1.5" fill="#ef4444"/><rect x="113.13" y="0.60" width="3.06" height="20.3" rx="1.5" fill="#22c55e"/><rect x="117.64" y="0.60" width="3.06" height="20.3" rx="1.5" fill="#22c55e"/><rect x="122.15" y="0.60" width="3.06" height="20.3" rx="1.5" fill="#22c55e"/><rect x="126.66" y="0.60" width="3.06" height="20.3" rx="1.5" fill="#22c55e"/><rect x="131.18" y="0.60" width="3.06" height="20.3" rx="1.5" fill="#ef4444"/><rect x="135.69" y="0.60" width="3.06" height="20.3" rx="1.5" fill="#22c55e"/><rect x="140.20" y="0.60" width="3.06" height="20.3" rx="1.5" fill="#22c55e"/><rect x="144.72" y="0.60" width="3.06" height="20.3" rx="1.5" fill="#22c55e"/><rect x="149.23" y="0.60" width="3.06" height="20.3" rx="1.5" fill="#ef4444"/><rect x="153.74" y="0.60" width="3.06" height="20.3" rx="1.5" fill="#22c55e"/><rect x="158.25" y="0.60" width="3.06" height="20.3" rx="1.5" fill="#ef4444"/><rect x="162.77" y="0.60" width="3.06" height="20.3" rx="1.5" fill="#22c55e"/><rect x="167.28" y="0.60" width="3.06" height="20.3" rx="1.5" fill="#22c55e"/><rect x="171.79" y="0.60" width="3.06" height="20.3" rx="1.5" fill="#22c55e"/><rect x="176.31" y="0.60" width="3.06" height="20.3" rx="1.5" fill="#ef4444"/><rect x="180.82" y="0.60" width="3.06" height="20.3" rx="1.5" fill="#22c55e"/><rect x="185.33" y="0.60" width="3.06" height="20.3" rx="1.5" fill="#22c55e"/><rect x="189.85" y="0.60" width="3.06" height="20.3" rx="1.5" fill="#ef4444"/><rect x="194.36" y="0.60" width="3.06" height="20.3" rx="1.5" fill="#22c55e"/><rect x="198.87" y="0.60" width="3.06" height="20.3" rx="1.5" fill="#ef4444"/><rect x="203.39" y="0.60" width="3.06" height="20.3" rx="1.5" fill="#22c55e"/><rect x="207.90" y="0.60" width="3.06" height="20.3" rx="1.5" fill="#ef4444"/><rect x="212.41" y="0.60" width="3.06" height="20.3" rx="1.5" fill="#ef4444"/><rect x="216.92" y="0.60" width="3.06" height="20.3" rx="1.5" fill="#22c55e"/><rect x="221.44" y="0.60" width="3.06" height="20.3" rx="1.5" fill="#22c55e"/></svg>
<div class="t" style="left:289.50px;top:518.73px;font-size:8px;color:#a1a7b4;font-weight:400;">9 hours ago</div>
<div class="t" style="right:287.00px;top:518.73px;font-size:8px;color:#a1a7b4;font-weight:400;text-align:right;">6 minutes ago</div>
<div class="b" style="left:536.00px;top:429.00px;width:254.50px;height:109.00px;border:1px solid #1a1f2e;border-radius:3px;background:transparent;"></div>
<div class="t" style="left:552.00px;top:448.33px;font-size:10px;color:#ffffff;font-weight:700;letter-spacing:-0.3px">nas</div>
<div class="t" style="left:552.00px;top:462.25px;font-size:9.15px;color:#a1a7b4;font-weight:400;">misc</div>
<div class="b" style="left:717.10px;top:444.40px;width:58.2px;height:13.5px;border-radius:7px;background:#921c1f"></div>
<svg class="b" style="left:717.10px;top:444.40px" width="20" height="14"><circle cx="9.0" cy="6.9" r="2.3" fill="#f87171"/></svg>
<div class="t" style="left:731.60px;top:448.27px;font-size:7.6px;color:#fde2e2;font-weight:700;">Unhealthy</div>
<div class="t" style="right:24.50px;top:484.47px;font-size:7.6px;color:#a1a7b4;font-weight:400;text-align:right;">~10000ms</div>
<svg class="b" style="left:551px;top:494px" width="227" height="22"><rect x="0.80" y="0.60" width="3.06" height="20.3" rx="1.5" fill="#ef4444"/><rect x="5.31" y="0.60" width="3.06" height="20.3" rx="1.5" fill="#ef4444"/><rect x="9.83" y="0.60" width="3.06" height="20.3" rx="1.5" fill="#ef4444"/><rect x="14.34" y="0.60" width="3.06" height="20.3" rx="1.5" fill="#ef4444"/><rect x="18.85" y="0.60" width="3.06" height="20.3" rx="1.5" fill="#ef4444"/><rect x="23.36" y="0.60" width="3.06" height="20.3" rx="1.5" fill="#ef4444"/><rect x="27.88" y="0.60" width="3.06" height="20.3" rx="1.5" fill="#ef4444"/><rect x="32.39" y="0.60" width="3.06" height="20.3" rx="1.5" fill="#ef4444"/><rect x="36.90" y="0.60" width="3.06" height="20.3" rx="1.5" fill="#ef4444"/><rect x="41.42" y="0.60" width="3.06" height="20.3" rx="1.5" fill="#ef4444"/><rect x="45.93" y="0.60" width="3.06" height="20.3" rx="1.5" fill="#ef4444"/><rect x="50.44" y="0.60" width="3.06" height="20.3" rx="1.5" fill="#ef4444"/><rect x="54.96" y="0.60" width="3.06" height="20.3" rx="1.5" fill="#ef4444"/><rect x="59.47" y="0.60" width="3.06" height="20.3" rx="1.5" fill="#ef4444"/><rect x="63.98" y="0.60" width="3.06" height="20.3" rx="1.5" fill="#ef4444"/><rect x="68.49" y="0.60" width="3.06" height="20.3" rx="1.5" fill="#ef4444"/><rect x="73.01" y="0.60" width="3.06" height="20.3" rx="1.5" fill="#ef4444"/><rect x="77.52" y="0.60" width="3.06" height="20.3" rx="1.5" fill="#ef4444"/><rect x="82.03" y="0.60" width="3.06" height="20.3" rx="1.5" fill="#ef4444"/><rect x="86.55" y="0.60" width="3.06" height="20.3" rx="1.5" fill="#ef4444"/><rect x="91.06" y="0.60" width="3.06" height="20.3" rx="1.5" fill="#ef4444"/><rect x="95.57" y="0.60" width="3.06" height="20.3" rx="1.5" fill="#ef4444"/><rect x="100.09" y="0.60" width="3.06" height="20.3" rx="1.5" fill="#ef4444"/><rect x="104.60" y="0.60" width="3.06" height="20.3" rx="1.5" fill="#ef4444"/><rect x="109.11" y="0.60" width="3.06" height="20.3" rx="1.5" fill="#ef4444"/><rect x="113.62" y="0.60" width="3.06" height="20.3" rx="1.5" fill="#ef4444"/><rect x="118.14" y="0.60" width="3.06" height="20.3" rx="1.5" fill="#ef4444"/><rect x="122.65" y="0.60" width="3.06" height="20.3" rx="1.5" fill="#ef4444"/><rect x="127.16" y="0.60" width="3.06" height="20.3" rx="1.5" fill="#ef4444"/><rect x="131.68" y="0.60" width="3.06" height="20.3" rx="1.5" fill="#ef4444"/><rect x="136.19" y="0.60" width="3.06" height="20.3" rx="1.5" fill="#ef4444"/><rect x="140.70" y="0.60" width="3.06" height="20.3" rx="1.5" fill="#ef4444"/><rect x="145.22" y="0.60" width="3.06" height="20.3" rx="1.5" fill="#ef4444"/><rect x="149.73" y="0.60" width="3.06" height="20.3" rx="1.5" fill="#ef4444"/><rect x="154.24" y="0.60" width="3.06" height="20.3" rx="1.5" fill="#ef4444"/><rect x="158.75" y="0.60" width="3.06" height="20.3" rx="1.5" fill="#ef4444"/><rect x="163.27" y="0.60" width="3.06" height="20.3" rx="1.5" fill="#ef4444"/><rect x="167.78" y="0.60" width="3.06" height="20.3" rx="1.5" fill="#ef4444"/><rect x="172.29" y="0.60" width="3.06" height="20.3" rx="1.5" fill="#ef4444"/><rect x="176.81" y="0.60" width="3.06" height="20.3" rx="1.5" fill="#ef4444"/><rect x="181.32" y="0.60" width="3.06" height="20.3" rx="1.5" fill="#ef4444"/><rect x="185.83" y="0.60" width="3.06" height="20.3" rx="1.5" fill="#ef4444"/><rect x="190.35" y="0.60" width="3.06" height="20.3" rx="1.5" fill="#ef4444"/><rect x="194.86" y="0.60" width="3.06" height="20.3" rx="1.5" fill="#ef4444"/><rect x="199.37" y="0.60" width="3.06" height="20.3" rx="1.5" fill="#ef4444"/><rect x="203.88" y="0.60" width="3.06" height="20.3" rx="1.5" fill="#ef4444"/><rect x="208.40" y="0.60" width="3.06" height="20.3" rx="1.5" fill="#ef4444"/><rect x="212.91" y="0.60" width="3.06" height="20.3" rx="1.5" fill="#ef4444"/><rect x="217.42" y="0.60" width="3.06" height="20.3" rx="1.5" fill="#ef4444"/><rect x="221.94" y="0.60" width="3.06" height="20.3" rx="1.5" fill="#ef4444"/></svg>
<div class="t" style="left:552.00px;top:518.73px;font-size:8px;color:#a1a7b4;font-weight:400;">8 hours ago</div>
<div class="t" style="right:24.50px;top:518.73px;font-size:8px;color:#a1a7b4;font-weight:400;text-align:right;">1 minute ago</div>
</body></html>
